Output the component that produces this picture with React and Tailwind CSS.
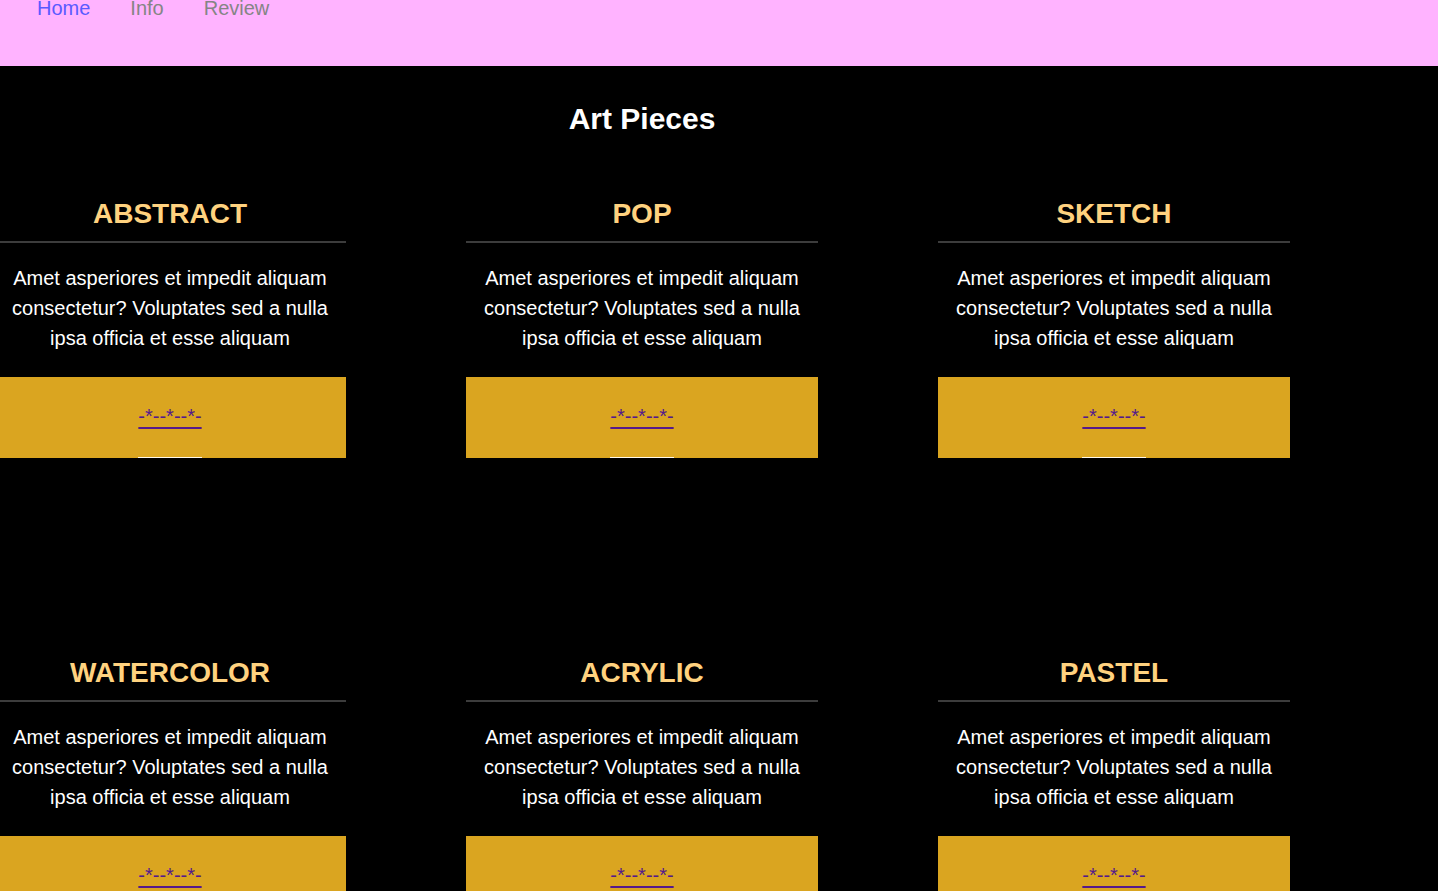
const categories = ["ABSTRACT", "POP", "SKETCH", "WATERCOLOR", "ACRYLIC", "PASTEL"];

const blurb = "Amet asperiores et impedit aliquam consectetur? Voluptates sed a nulla ipsa officia et esse aliquam";

function NavBar() {
  return (
    <nav className="h-[66px] bg-[#ffb3ff]">
      <ul className="flex gap-[40px] pl-[37px] text-[20px] leading-[16px]">
        <li>
          <a href="#" className="text-[#5a5aff]">Home</a>
        </li>
        <li>
          <a href="#" className="text-[#858585]">Info</a>
        </li>
        <li>
          <a href="#" className="text-[#858585]">Review</a>
        </li>
      </ul>
    </nav>
  );
}

function ArtCard({ title }) {
  return (
    <div className="flex flex-col">
      <h2 className="text-center text-[28px] font-bold leading-[32px] text-[#ffd27f]">{title}</h2>
      <div className="mt-[11px] h-[2px] bg-[#3c3c3c]" />
      <p className="mt-[20px] px-[10px] text-center text-[20px] leading-[30px] text-white">{blurb}</p>
      <div className="mt-[24px] flex h-[81px] justify-center bg-[#daa520]">
        <div className="flex flex-col">
          <a
            href="#"
            className="pt-[28px] text-[20px] leading-[23px] text-[#551a8b] underline underline-offset-[4px]"
          >
            -*--*--*-
          </a>
          <div className="mt-auto h-px bg-[#fff8e8]" />
        </div>
      </div>
    </div>
  );
}

export default function App() {
  return (
    <div className="min-h-[891px] overflow-hidden bg-black font-['Liberation_Sans',Arial,sans-serif]">
      <NavBar />
      <main className="w-[1284px]">
        <h1 className="pt-[36px] text-center text-[30px] font-bold leading-[34px] text-white">Art Pieces</h1>
        <div className="-ml-[6px] mt-[62px] grid w-[1296px] grid-cols-[352px_352px_352px] gap-x-[120px] gap-y-[199px]">
          {categories.map((name) => (
            <ArtCard key={name} title={name} />
          ))}
        </div>
      </main>
    </div>
  );
}
